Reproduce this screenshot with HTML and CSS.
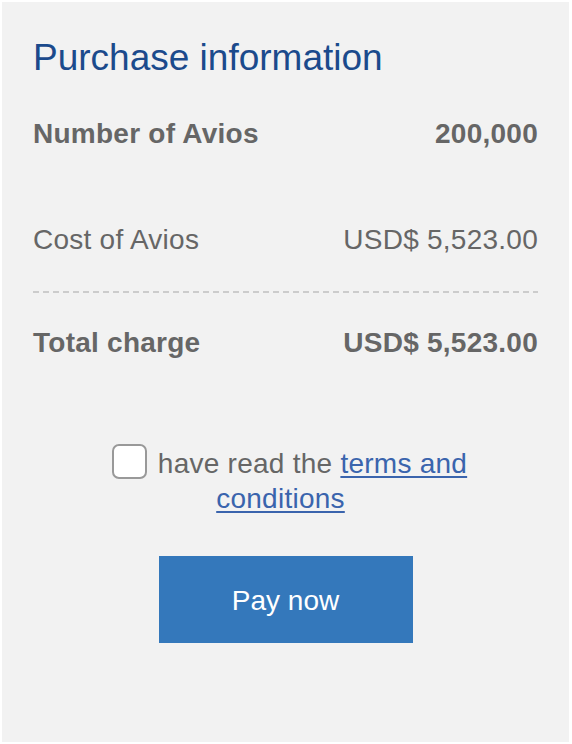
FILE: index.html
```html
<!DOCTYPE html>
<html lang="en">
<head>
<meta charset="utf-8">
<title>Purchase information</title>
<link rel="stylesheet" href="styles.css">
</head>
<body>
<section class="panel">
  <h1 class="title">Purchase information</h1>
  <div class="row row-first strong">
    <span>Number of Avios</span>
    <span>200,000</span>
  </div>
  <div class="row row-cost">
    <span>Cost of Avios</span>
    <span>USD$ 5,523.00</span>
  </div>
  <div class="divider"></div>
  <div class="row row-total strong">
    <span>Total charge</span>
    <span>USD$ 5,523.00</span>
  </div>
  <p class="terms"><span class="checkbox" role="checkbox" aria-checked="false"></span>have read the <a href="#" class="link">terms and conditions</a></p>
  <button class="pay" type="button">Pay now</button>
</section>
</body>
</html>
```

FILE: styles.css
```css
html, body {
  margin: 0;
  padding: 0;
  background: #ffffff;
}

body {
  font-family: "Liberation Sans", Arial, Helvetica, sans-serif;
  color: #666666;
}

.panel {
  box-sizing: border-box;
  margin: 2px 0 0 2px;
  width: 567px;
  height: 740px;
  padding: 34px 31px 0 31px;
  background: #f2f2f2;
}

.title {
  margin: 0;
  font-size: 37px;
  line-height: 44px;
  font-weight: normal;
  color: #1b4a8c;
}

.row {
  display: flex;
  justify-content: space-between;
  font-size: 28px;
  line-height: 40px;
  letter-spacing: 0.25px;
}

.strong {
  font-weight: bold;
}

.row-first {
  margin-top: 34px;
}

.row-cost {
  margin-top: 66px;
}

.divider {
  margin-top: 31px;
  height: 2px;
  background: repeating-linear-gradient(to right, #cccccc 0, #cccccc 6px, transparent 6px, transparent 10px);
}

.row-total {
  margin-top: 30px;
}

.terms {
  margin: 81px 10px 0 0;
  text-align: center;
  font-size: 28px;
  line-height: 35px;
  letter-spacing: 0.25px;
}

.checkbox {
  display: inline-block;
  box-sizing: border-box;
  width: 35px;
  height: 35px;
  margin: 0 11px 0 18px;
  border: 2px solid #999999;
  border-radius: 7px;
  background: #ffffff;
  vertical-align: -6px;
}

.link {
  color: #3a64ad;
  text-decoration: underline;
  text-underline-offset: 3px;
}

.pay {
  display: block;
  margin: 40px auto 0 auto;
  width: 254px;
  height: 87px;
  border: none;
  background: #3478bb;
  color: #ffffff;
  font-family: "Liberation Sans", Arial, Helvetica, sans-serif;
  font-size: 28px;
  padding: 2px 0 0 0;
  cursor: pointer;
}
```
